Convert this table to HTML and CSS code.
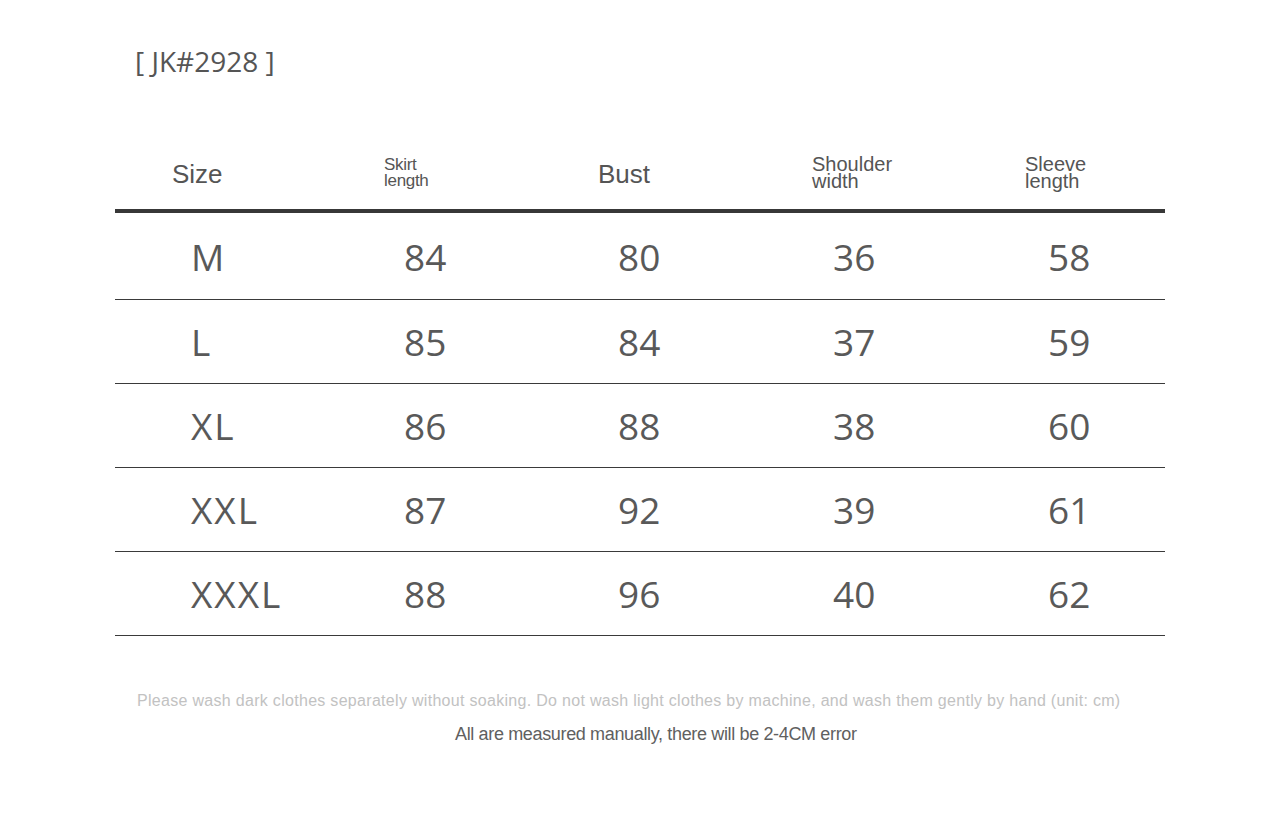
FILE: index.html
```html
<!DOCTYPE html>
<html>
<head>
<meta charset="utf-8">
<link rel="stylesheet" href="styles.css">
</head>
<body>
<div class="page">
  <div class="title">[ JK#2928 ]</div>
  <div class="table">
    <div class="head">
      <div class="h big">Size</div>
      <div class="h small sk">Skirt<br>length</div>
      <div class="h big">Bust</div>
      <div class="h small">Shoulder<br>width</div>
      <div class="h small">Sleeve<br>length</div>
    </div>
    <div class="row first"><div class="sz">M</div><div>84</div><div>80</div><div>36</div><div>58</div></div>
    <div class="row"><div class="sz">L</div><div>85</div><div>84</div><div>37</div><div>59</div></div>
    <div class="row"><div class="sz">XL</div><div>86</div><div>88</div><div>38</div><div>60</div></div>
    <div class="row"><div class="sz">XXL</div><div>87</div><div>92</div><div>39</div><div>61</div></div>
    <div class="row"><div class="sz">XXXL</div><div>88</div><div>96</div><div>40</div><div>62</div></div>
  </div>
  <div class="note1">Please wash dark clothes separately without soaking. Do not wash light clothes by machine, and wash them gently by hand (unit: cm)</div>
  <div class="note2">All are measured manually, there will be 2-4CM error</div>
</div>
</body>
</html>
```

FILE: styles.css
```css
html, body {
  margin: 0;
  padding: 0;
  background: #fff;
}
.page {
  width: 1280px;
  height: 814px;
  padding-top: 41px;
  box-sizing: border-box;
}
.title {
  margin-left: 135px;
  font-family: "Open Sans", sans-serif;
  font-size: 28px;
  line-height: 40px;
  color: #555;
  height: 40px;
}
.table {
  margin: 58px 0 0 115px;
  width: 1050px;
}
.head {
  display: grid;
  grid-template-columns: 212px 214px 214px 213px auto;
  padding-left: 57px;
  height: 70px;
  align-items: center;
  border-bottom: 4px solid #383838;
  font-family: "Liberation Sans", Arial, sans-serif;
  color: #555;
}
.h.big {
  font-size: 26px;
  line-height: 30px;
}
.h.small {
  font-size: 20px;
  line-height: 17px;
  padding-bottom: 2px;
}
.h.small.sk {
  font-size: 17px;
  line-height: 16px;
  letter-spacing: -0.3px;
}
.row {
  display: grid;
  grid-template-columns: 213px 214px 215px 215px auto;
  padding-left: 76px;
  height: 83px;
  align-items: center;
  border-bottom: 1px solid #3a3a3a;
  font-family: "Open Sans", sans-serif;
  font-size: 37px;
  color: #595959;
}
.row .sz {
  letter-spacing: 2px;
}
.row.first {
  height: 86px;
}
.note1 {
  margin-top: 55px;
  margin-left: 137px;
  font-family: "Liberation Sans", Arial, sans-serif;
  font-size: 16px;
  line-height: 20px;
  letter-spacing: 0.3px;
  color: #c2c2c2;
  white-space: nowrap;
}
.note2 {
  margin-top: 13px;
  margin-left: 455px;
  font-family: "Liberation Sans", Arial, sans-serif;
  font-size: 18px;
  line-height: 20px;
  color: #606060;
  white-space: nowrap;
  letter-spacing: -0.35px;
}
```
